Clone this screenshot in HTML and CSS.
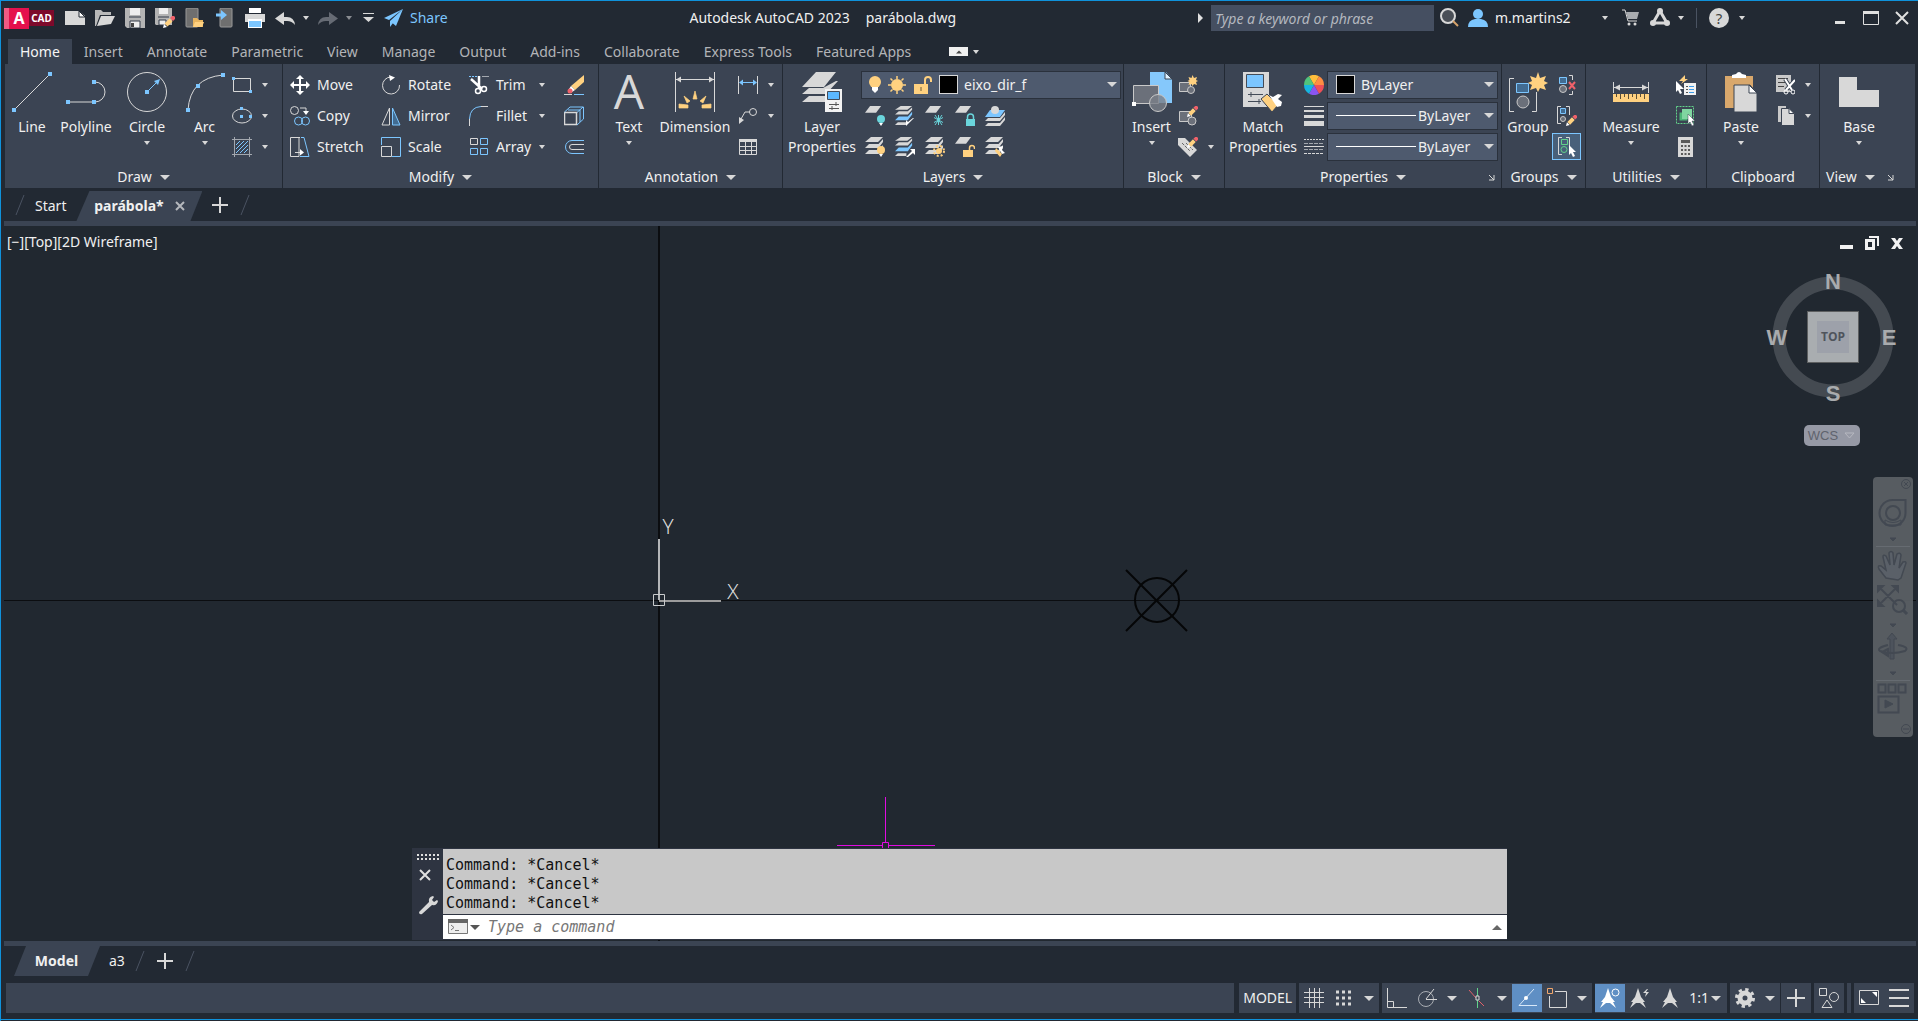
FILE: index.html
```
<!DOCTYPE html>
<html lang="en">
<head>
<meta charset="utf-8">
<title>Autodesk AutoCAD 2023 - parábola.dwg</title>
<link rel="stylesheet" href="styles.css">
</head>
<body>
<svg class="defs" aria-hidden="true">
  <symbol id="sheets" viewBox="0 0 20 20"><path d="M6 0h12l-5 5H0zM0 11l4-4h9.500l4.500-5v3L13.500 11zM0 17l4-4h9.500l4.500-5v3l-4.500 6z" fill="#d8d8d8"/></symbol>
  <symbol id="sheet" viewBox="0 0 20 20"><path d="M6 0h13l-6 8H0z" fill="#d8d8d8"/></symbol>
  <symbol id="sheets-blue" viewBox="0 0 20 20"><path d="M6 0h12l-5 4H0zM0 9l4-3.500h9.500L18 1.500v2.500L13.500 9z" fill="#d8d8d8"/><path d="M0 15l4-4h9.500L18 6v3l-4.500 6z" fill="#7cc6ff"/><path d="M0 20l3-3h9v3z" fill="#d8d8d8"/></symbol>
  <symbol id="slash" viewBox="0 0 10 20"><path d="M1 20L9 0" stroke="#4a5362" fill="none"/></symbol>
  <symbol id="plus" viewBox="0 0 16 16"><path d="M8 0v16M0 8h16" stroke="#d8d8d8" stroke-width="2"/></symbol>
  <symbol id="pencil" viewBox="0 0 12 12"><path d="M0 12l1-4 3 3z" fill="#fff"/><path d="M1.500 7.500l5-5 3 3-5 5z" fill="#ffd180"/><path d="M7 2l2-2h2l1 1v2l-2 2z" fill="#f0616a"/></symbol>
  <symbol id="annot" viewBox="0 0 20 20"><path d="M10 0l3 9 4 5h-2l3 6-6-5H8l-6 5 3-6H3l4-5z" fill="currentColor"/></symbol>
</svg>

<div class="app">
  <header class="titlebar">
    <div class="qat">
      <button class="logo" aria-label="AutoCAD menu"><span class="logo-a">A</span><span class="logo-cad">CAD</span></button>
      <button class="tool" aria-label="New"><svg width="20" height="20"><path d="M0 3h14l6 5v9H0z" fill="#d8d8d8"/><path d="M14 3v6h6z" fill="#fff" stroke="#222933"/></svg></button>
      <button class="tool" aria-label="Open"><svg width="20" height="20"><path d="M0 2h6l2 2h8v3H5L1 18H0z" fill="#b9b9b9"/><path d="M6 8h14l-4 8-14 2z" fill="#d8d8d8"/></svg></button>
      <button class="tool" aria-label="Save"><svg width="20" height="20"><path d="M0 0h20v20H2l-2-2z" fill="#b4b4b4"/><path d="M5 0h10v7H5z" fill="#eee"/><path d="M4 9h12M5 13h10v7H5z" fill="#eee" stroke="#333b48"/><path d="M6 15h3v4H6z" fill="#444"/></svg></button>
      <button class="tool" aria-label="Save as"><svg width="20" height="20"><path d="M0 0h17v17H1l-1-1z" fill="#b4b4b4"/><path d="M4 0h9v6H4z" fill="#eee"/><path d="M3 9h11M4 12h7v5H4z" fill="#eee" stroke="#333b48"/><use href="#pencil" x="8" y="8" width="12" height="12"/></svg></button>
      <button class="tool" aria-label="Open from web and mobile"><svg width="20" height="20"><rect x="1" y="0" width="12" height="19" rx="1" fill="#6f6f6f" stroke="#999"/><path d="M8 10h4l2 2h4v7H8z" fill="#e9b55f"/><path d="M10 14h9l-2 5H8z" fill="#ffd180"/></svg></button>
      <button class="tool" aria-label="Save to web and mobile"><svg width="20" height="20"><rect x="5" y="0" width="12" height="19" rx="1" fill="#6f6f6f" stroke="#999"/><path d="M1 7h7" stroke="#7cc6ff" stroke-width="3"/><path d="M6 2l6 5-6 5z" fill="#7cc6ff"/></svg></button>
      <button class="tool" aria-label="Print"><svg width="20" height="20"><path d="M4 0h12v5H4z" fill="#fff"/><path d="M0 6h20v8H0z" fill="#d8d8d8"/><path d="M3 11h14v9H3z" fill="#fff"/><path d="M4 13h12v6H4z" fill="#7cc6ff"/></svg></button>
      <button class="split" aria-label="Undo"><svg width="20" height="20"><path d="M9 4v5h3q7 0 8 8-3-4-8-4H9v4L0 10.500z" fill="#d8d8d8"/></svg><i class="caret"></i></button>
      <button class="split dim" aria-label="Redo"><svg width="20" height="20"><path d="M11 4v5H8q-7 0-8 8 3-4 8-4h3v4l9-6.500z" fill="#666b74"/></svg><i class="caret"></i></button>
      <button class="customize" aria-label="Customize toolbar"><svg width="11" height="20"><path d="M0 5h11v1H0zM0 9h11l-5.500 5z" fill="#d8d8d8"/></svg></button>
      <button class="share"><svg width="20" height="20"><path d="M0 10L19 1 5 12zM6 13L19 1l-7 17zM6 13l3 2-3 4zM12 12l5 2" fill="#7cc6ff"/></svg>Share</button>
    </div>
    <h1 class="title"><span>Autodesk AutoCAD 2023</span><span>parábola.dwg</span></h1>
    <div class="account">
      <i class="caret-right"></i>
      <input class="search" type="text" placeholder="Type a keyword or phrase" aria-label="Search">
      <button class="tool" aria-label="Search"><svg width="20" height="20"><circle cx="8" cy="8" r="7" fill="#4a4f57" stroke="#d8d8d8" stroke-width="2"/><path d="M13 13l5 5" stroke="#d7a36b" stroke-width="2"/></svg></button>
      <button class="user"><svg width="20" height="20"><circle cx="10" cy="6" r="5" fill="#7cc6ff"/><path d="M0 19q0-7 7-8h6q7 1 7 8z" fill="#7cc6ff"/></svg><span>m.martins2</span><i class="caret"></i></button>
      <button class="tool" aria-label="Store"><svg width="20" height="20"><path d="M1 2h3l3 11h9" fill="none" stroke="#d8d8d8"/><path d="M5 4h13l-2 7H7z" fill="#a8abb0"/><circle cx="8" cy="16" r="1.500" fill="#d8d8d8"/><circle cx="14" cy="16" r="1.500" fill="#d8d8d8"/></svg></button>
      <button class="split" aria-label="Autodesk App"><svg width="20" height="20"><path d="M10 3L3 15h14z" fill="none" stroke="#d8d8d8" stroke-width="3"/><circle cx="10" cy="3" r="3" fill="#d8d8d8"/><circle cx="3" cy="15" r="3" fill="#d8d8d8"/><circle cx="17" cy="15" r="3" fill="#d8d8d8"/></svg><i class="caret"></i></button>
      <button class="help" aria-label="Help"><span class="help-disc">?</span><i class="caret"></i></button>
      <button class="win" aria-label="Minimize"><svg width="16" height="16"><path d="M3 11h10v3H3z" fill="#e0e0e0"/></svg></button>
      <button class="win" aria-label="Maximize"><svg width="16" height="16"><path d="M.5 1.500h15v13H.500z" fill="none" stroke="#e0e0e0"/><path d="M0 1h16v3H0z" fill="#e0e0e0"/></svg></button>
      <button class="win" aria-label="Close"><svg width="16" height="16"><path d="M2 2l12 12M14 2L2 14" stroke="#e0e0e0" stroke-width="2"/></svg></button>
    </div>
  </header>

  <nav class="tabs">
    <button class="tab active">Home</button><button class="tab">Insert</button><button class="tab">Annotate</button><button class="tab">Parametric</button><button class="tab">View</button><button class="tab">Manage</button><button class="tab">Output</button><button class="tab">Add-ins</button><button class="tab">Collaborate</button><button class="tab">Express Tools</button><button class="tab">Featured Apps</button>
    <button class="tab-mode" aria-label="Minimize ribbon"><svg width="19" height="9"><rect width="19" height="9" fill="#f0f0f0"/><path d="M7 6.500l3-3 3 3z" fill="#444"/></svg><i class="caret"></i></button>
  </nav>

  <section class="ribbon">
    <div class="panel">
      <div class="body draw">
        <button class="big"><svg width="40" height="40"><path d="M2 38L38 2" stroke="#d8d8d8"/><path d="M0 36h4v4H0zM36 0h4v4h-4z" fill="#7cc6ff"/></svg>Line</button>
        <button class="big"><svg width="40" height="40"><path d="M2 30h27a10 10 0 0 0 0-20h-1" fill="none" stroke="#d8d8d8"/><path d="M0 28h4v4H0zM26 28h4v4h-4zM26 8h4v4h-4z" fill="#7cc6ff"/></svg>Polyline</button>
        <button class="big"><svg width="40" height="40"><circle cx="20" cy="20" r="19.500" fill="none" stroke="#d8d8d8"/><path d="M20 20L32 8" stroke="#7cc6ff"/><path d="M18 18h4v4h-4zM33 7l-6 2 4 4z" fill="#7cc6ff"/></svg>Circle<i class="caret"></i></button>
        <button class="big"><svg width="40" height="40"><path d="M3 38Q5 6 38 3" fill="none" stroke="#d8d8d8"/><path d="M1 36h4v4H1zM11 12h4v4h-4zM36 1h4v4h-4z" fill="#7cc6ff"/></svg>Arc<i class="caret"></i></button>
        <div class="stack">
          <button class="split" aria-label="Rectangle"><svg width="20" height="20"><path d="M1.500 3.500h17v13h-17z" fill="none" stroke="#d8d8d8"/><path d="M0 2h3v3H0zM17 15h3v3h-3z" fill="#7cc6ff"/></svg><i class="caret"></i></button>
          <button class="split" aria-label="Ellipse"><svg width="20" height="20"><ellipse cx="10" cy="10" rx="9.500" ry="7" fill="none" stroke="#d8d8d8"/><path d="M8 1h3v3H8zM8 9h3v3H8zM17 9h3v3h-3z" fill="#7cc6ff"/></svg><i class="caret"></i></button>
          <button class="split" aria-label="Hatch"><svg width="20" height="20"><path d="M2.500 0v20M17.500 0v20M0 2.500h20M0 17.500h20" stroke="#a3a8af"/><path d="M4 8l4-4M4 12l8-8M4 16L16 4M8 16l8-8M12 16l4-4" stroke="#7cc6ff"/></svg><i class="caret"></i></button>
        </div>
      </div>
      <div class="caption">Draw<i class="caret wide"></i></div>
    </div>

    <div class="panel">
      <div class="body modify">
        <div class="stack">
          <button class="row"><svg width="20" height="20"><path d="M10 0l4 4h-3v5h5V6l4 4-4 4v-3h-5v5h3l-4 4-4-4h3v-5H4v3l-4-4 4-4v3h5V4H6z" fill="#fff"/></svg>Move</button>
          <button class="row"><svg width="20" height="20"><circle cx="4.500" cy="4.500" r="4" fill="none" stroke="#d8d8d8"/><path d="M10 2h6v4" fill="none" stroke="#d8d8d8"/><path d="M13 5h6l-3 4z" fill="#fff"/><circle cx="8.500" cy="15" r="4" fill="none" stroke="#7cc6ff"/><circle cx="15.500" cy="15" r="4" fill="none" stroke="#7cc6ff"/></svg>Copy</button>
          <button class="row"><svg width="20" height="20"><path d="M10 .5H.5v19H9V.5M5 15.500h6" fill="none" stroke="#d8d8d8"/><path d="M10 12l4 3.500-4 3z" fill="#fff"/><path d="M11 .5h3l5 19h-9" fill="none" stroke="#7cc6ff"/></svg>Stretch</button>
        </div>
        <div class="stack">
          <button class="row"><svg width="20" height="20"><path d="M10 2a8.500 8.500 0 1 0 8.500 8" fill="none" stroke="#d8d8d8"/><path d="M8 0l6 2.500L9 6z" fill="#fff"/></svg>Rotate</button>
          <button class="row"><svg width="20" height="20"><path d="M8.500 2v17H1z" fill="none" stroke="#d8d8d8"/><path d="M11.500 2v17H19z" fill="#426c92" stroke="#7cc6ff"/></svg>Mirror</button>
          <button class="row"><svg width="20" height="20"><path d="M.5 8V.5h19v19H11" fill="none" stroke="#7cc6ff"/><path d="M.5 9.500h10v10H.500z" fill="none" stroke="#d8d8d8"/></svg>Scale</button>
        </div>
        <div class="stack">
          <button class="row flyout"><svg width="20" height="20"><path d="M0 1.500h12" stroke="#7cc6ff" stroke-dasharray="2 1"/><path d="M13 1.500h7" stroke="#a3a8af"/><path d="M2 4l11 10M10 1v13" stroke="#fff" stroke-width="2.500"/><circle cx="9" cy="16" r="2.500" fill="none" stroke="#fff" stroke-width="1.500"/><circle cx="15" cy="14" r="2.500" fill="none" stroke="#fff" stroke-width="1.500"/></svg><span>Trim</span><i class="caret"></i></button>
          <button class="row flyout"><svg width="20" height="20"><path d="M.5 20v-7M12 .5h7" stroke="#d8d8d8" fill="none"/><path d="M.5 13Q1 1 12 .5" fill="none" stroke="#7cc6ff"/></svg><span>Fillet</span><i class="caret"></i></button>
          <button class="row flyout"><svg width="20" height="20"><path d="M1.500 1.500h7v6h-7z" fill="none" stroke="#d8d8d8"/><path d="M11.500 1.500h7v6h-7zM1.500 11.500h7v6h-7zM11.500 11.500h7v6h-7z" fill="none" stroke="#7cc6ff"/></svg><span>Array</span><i class="caret"></i></button>
        </div>
        <div class="stack">
          <button class="tool" aria-label="Erase"><svg width="20" height="20"><path d="M0 19.500h8" stroke="#d8d8d8"/><path d="M10 19.500h10" stroke="#7cc6ff"/><path d="M20 0v7L11 15 7 11z" fill="#ffd180"/><path d="M7 11l4 4-3 2-3-3z" fill="#fff"/><circle cx="6" cy="16" r="2.500" fill="#f0616a"/></svg></button>
          <button class="tool" aria-label="Explode"><svg width="20" height="20"><path d="M.5 6.500h12v12H.500z" fill="none" stroke="#d8d8d8" stroke-width="1.500"/><path d="M.5 6L6 1h13.500v12L13 19M13 6.500L19 1M4 4h12v12" fill="none" stroke="#7cc6ff"/></svg></button>
          <button class="tool" aria-label="Offset"><svg width="20" height="20"><path d="M20 3.500H8a6.500 6.500 0 0 0 0 13h12" fill="none" stroke="#7cc6ff"/><path d="M20 7.500H8a2.500 2.500 0 0 0 0 5h12" fill="none" stroke="#d8d8d8"/></svg></button>
        </div>
      </div>
      <div class="caption">Modify<i class="caret wide"></i></div>
    </div>

    <div class="panel">
      <div class="body annotation">
        <button class="big"><svg class="glyph" width="40" height="40"><text x="20" y="37" text-anchor="middle" class="glyph-a">A</text></svg>Text<i class="caret"></i></button>
        <button class="big"><svg width="40" height="40"><path d="M.5 0v40M39.500 0v40M1 7.500h38" stroke="#d8d8d8"/><path d="M1 7.500l5-3v6zM39 7.500l-5-3v6z" fill="#d8d8d8"/><path d="M20 19l2 8h-4zM9 24l6 5-3 2zM31 24l-6 5 3 2zM4 32l9 1v3H4zM36 32l-9 1v3h9z" fill="#ffd180" stroke="#ffd180" stroke-width=".7"/></svg>Dimension</button>
        <div class="stack">
          <button class="split" aria-label="Linear dimension"><svg width="20" height="20"><path d="M.5 1v18M19.500 1v18" stroke="#d8d8d8"/><path d="M2 7.500h16" stroke="#7cc6ff"/><path d="M1 7.500l4-3v6zM19 7.500l-4-3v6z" fill="#7cc6ff"/></svg><i class="caret"></i></button>
          <button class="split" aria-label="Leader"><svg width="20" height="20"><path d="M3 13l4-7h5" fill="none" stroke="#d8d8d8"/><circle cx="15" cy="6" r="3.500" fill="none" stroke="#d8d8d8"/><path d="M1 18v-7l5 3z" fill="#d8d8d8"/></svg><i class="caret"></i></button>
          <button class="tool" aria-label="Table"><svg width="20" height="20"><path d="M1 2h18v3H1z" fill="#d8d8d8"/><path d="M1.500 2.500h17v15h-17zM1 9.500h18M1 13.500h18M7.500 5v13M13.500 5v13" fill="none" stroke="#d8d8d8"/></svg></button>
        </div>
      </div>
      <div class="caption">Annotation<i class="caret wide"></i></div>
    </div>

    <div class="panel">
      <div class="body layers">
        <button class="big two-line"><svg width="40" height="40"><path d="M14 0h20L22 15H0zM0 22l7-6h14L34 9h2L24 22zM0 30l7-6h17v6z" fill="#d8d8d8"/><path d="M23 17h17v23H23z" fill="#f2f2f2"/><path d="M25.500 19.500h12v8h-12z" fill="#5cb8ff" stroke="#444c58"/><path d="M27 32.500h10M27 36.500h10M34 30v4M30 34v4" stroke="#555"/></svg>Layer<br>Properties</button>
        <div class="layer-tools">
          <div class="combo layer-combo">
            <svg width="12" height="20"><circle cx="6" cy="7" r="6" fill="#ffd180"/><path d="M3 12h6v3l-3 3-3-3z" fill="#fff"/></svg>
            <svg width="20" height="20"><circle cx="10" cy="10" r="6" fill="#ffd180"/><path d="M10 1v3M10 16v3M1 10h3M16 10h3M3.500 3.500l2 2M14.500 14.500l2 2M16.500 3.500l-2 2M3.500 16.500l2-2" stroke="#ffd180" stroke-width="1.500"/></svg>
            <svg width="20" height="20"><path d="M1 9h14v10H1z" fill="#ffd180"/><path d="M12 9V5a3 3 0 0 1 6 0v2" fill="none" stroke="#ffd180" stroke-width="2"/><path d="M8 12v4" stroke="#6c5a36"/></svg>
            <span class="swatch"></span>
            <select aria-label="Layer"><option>eixo_dir_f</option></select><i class="caret wide"></i>
          </div>
          <div class="icon-row">
            <button class="tool" aria-label="Layer off"><svg width="20" height="20"><use href="#sheet" width="17" height="17"/><circle cx="16" cy="13" r="4" fill="#6ad5dc"/><path d="M14 17h4l-2 3z" fill="#fff"/></svg></button>
            <button class="tool" aria-label="Isolate"><svg width="20" height="20"><use href="#sheets-blue" width="19" height="19"/><path d="M19 12l-8 8v-6l2 2 5-4z" fill="#fff"/></svg></button>
            <button class="tool" aria-label="Freeze"><svg width="20" height="20"><use href="#sheet" width="17" height="17"/><path d="M13.500 9v10M9 11.500l9 5M18 11.500l-9 5M10 9l7 10M17 9l-7 10" stroke="#6ad5dc"/></svg></button>
            <button class="tool" aria-label="Lock"><svg width="20" height="20"><use href="#sheet" width="17" height="17"/><path d="M11 13h9v7h-9z" fill="#6ad5dc"/><path d="M12.500 13v-2a3 3 0 0 1 6 0v2" fill="none" stroke="#6ad5dc" stroke-width="1.500"/></svg></button>
            <button class="tool" aria-label="Make current"><svg width="20" height="20"><path d="M5 4h15l-5 7H0z" fill="#7cc6ff"/><path d="M0 15l3-3h12l5-6v3l-5 6zM0 20l3-3h12l5-6v3l-5 6z" fill="#d8d8d8"/><circle cx="10" cy="4" r="4" fill="#d8d8d8"/></svg></button>
          </div>
          <div class="icon-row">
            <button class="tool" aria-label="All layers on"><svg width="20" height="20"><use href="#sheets" width="20" height="20"/><circle cx="16" cy="13" r="4" fill="#ffd180"/><path d="M14 17h4l-2 3z" fill="#fff"/></svg></button>
            <button class="tool" aria-label="Unisolate"><svg width="20" height="20"><use href="#sheets-blue" width="19" height="19"/><path d="M11 20l6-6-2-2h5v6l-2-2-5 4z" fill="#fff"/></svg></button>
            <button class="tool" aria-label="Thaw all"><svg width="20" height="20"><use href="#sheets" width="20" height="20"/><circle cx="14" cy="14" r="5" fill="none" stroke="#ffd180" stroke-width="2" stroke-dasharray="2 2"/><circle cx="14" cy="14" r="3" fill="#ffd180"/></svg></button>
            <button class="tool" aria-label="Unlock"><svg width="20" height="20"><use href="#sheet" width="17" height="17"/><path d="M8 13h10v7H8z" fill="#ffd180"/><path d="M14.500 13v-2a2.500 2.500 0 0 1 5 0v1" fill="none" stroke="#ffd180" stroke-width="1.500"/></svg></button>
            <button class="tool" aria-label="Match layer"><svg width="20" height="20"><use href="#sheets" width="20" height="20"/><path d="M11 11l6 6-2 3-5-6z" fill="#ffd180"/><path d="M13 10l5-1-1 4 3 3-3 1z" fill="#fff"/></svg></button>
          </div>
        </div>
      </div>
      <div class="caption">Layers<i class="caret wide"></i></div>
    </div>

    <div class="panel">
      <div class="body block">
        <button class="big"><svg width="40" height="40"><path d="M18 0h16l6 7v24H18z" fill="#85c8fb"/><path d="M33 0v7h7z" fill="#dff1ff" stroke="#3b4453"/><path d="M1.500 13.500h25v18h-25z" fill="#6b707a" stroke="#c9c9c9"/><circle cx="26" cy="31" r="8.500" fill="#7a7f88" fill-opacity=".8" stroke="#c9c9c9"/><path d="M0 30h4v4H0z" fill="#fff"/></svg>Insert<i class="caret"></i></button>
        <div class="stack">
          <button class="tool" aria-label="Create block"><svg width="20" height="20"><path d="M1.500 7.500h11v9h-11z" fill="#6b707a" stroke="#c9c9c9"/><circle cx="13" cy="15" r="3.500" fill="#6b707a" stroke="#c9c9c9"/><path d="M14.500 0l1.500 3 3-1-1 3 2 1-2 1 1 3-3-1-1.500 2-1-2-3 1 1-3-2-1 2-1-1-3 3 1z" fill="#ffd180"/></svg></button>
          <button class="tool" aria-label="Edit block"><svg width="20" height="20"><path d="M1.500 5.500h12v10h-12z" fill="#6b707a" stroke="#c9c9c9"/><circle cx="14" cy="15" r="4" fill="#6b707a" stroke="#c9c9c9"/><use href="#pencil" x="9" y="0" width="11" height="11"/></svg></button>
          <button class="split" aria-label="Edit attributes"><svg width="20" height="20"><path d="M0 1h7l12 12-7 7L0 8z" fill="#d8d8d8"/><path d="M4 6l8 8M8 6l7 7" stroke="#666" stroke-dasharray="3 1"/><use href="#pencil" x="9" y="0" width="11" height="11"/></svg><i class="caret"></i></button>
        </div>
      </div>
      <div class="caption">Block<i class="caret wide"></i></div>
    </div>

    <div class="panel">
      <div class="body properties">
        <button class="big two-line"><svg width="40" height="40"><path d="M0 0h26v35H0z" fill="#d8d8d8"/><path d="M3.500 2.500h17v13h-17z" fill="#7cc6ff" stroke="#444c58"/><path d="M5 22.500h15M5 29.500h13M8 20v5M16 27v5" stroke="#444c58"/><path d="M18 27l6-5 11 11-6 7z" fill="#ffd180" stroke="#3b4453"/><path d="M26 23l4 2 5-3 4 1-4 4 4 3-1 4-4 1z" fill="#fff"/></svg>Match<br>Properties</button>
        <div class="prop-grid">
          <svg width="20" height="20" viewBox="0 0 20 20"><path d="M10 10L5 1.300A10 10 0 0 1 15 1.300z" fill="#ffbe3c"/><path d="M10 10l5-8.700A10 10 0 0 1 20 10z" fill="#ff8c42"/><path d="M10 10h10a10 10 0 0 1-5 8.700z" fill="#ee4f57"/><path d="M10 10l5 8.700a10 10 0 0 1-10 0z" fill="#8a55f0"/><path d="M10 10L5 18.700A10 10 0 0 1 0 10z" fill="#16b5e0"/><path d="M10 10H0a10 10 0 0 1 5-8.700z" fill="#50c37c"/></svg>
          <div class="combo color-combo"><span class="swatch"></span><select aria-label="Colour"><option>ByLayer</option></select><i class="caret wide"></i></div>
          <svg width="20" height="20"><path d="M0 0h20v1H0zM0 4h20v2H0zM0 9h20v3H0zM0 15h20v5H0z" fill="#d8d8d8"/></svg>
          <div class="combo"><span class="sample"></span><select aria-label="Lineweight"><option>ByLayer</option></select><i class="caret wide"></i></div>
          <svg width="20" height="20"><path d="M0 2.500h20" stroke="#d8d8d8" stroke-dasharray="2 1"/><path d="M0 6.500h20M0 12.500h20" stroke="#a3a8af" stroke-dasharray="4 1"/><path d="M0 9.500h20" stroke="#d8d8d8"/><path d="M0 16.500h20" stroke="#d8d8d8" stroke-dasharray="3 1"/></svg>
          <div class="combo"><span class="sample"></span><select aria-label="Linetype"><option>ByLayer</option></select><i class="caret wide"></i></div>
        </div>
      </div>
      <div class="caption with-launcher"><span>Properties<i class="caret wide"></i></span><button class="launcher" aria-label="Properties dialog"><svg width="7" height="7"><path d="M1 1l5 5M6 1v5H1" fill="none" stroke="#d8d8d8"/></svg></button></div>
    </div>

    <div class="panel">
      <div class="body groups">
        <button class="big"><svg width="40" height="40"><path d="M6 6.500H1.500v33H6M24 39.500h4.500V20" fill="none" stroke="#d8d8d8"/><path d="M8.500 11.500h12v9h-12z" fill="#426c92" stroke="#7cc6ff"/><circle cx="15" cy="30" r="6" fill="#6b707a" stroke="#c9c9c9"/><path d="M30 0l2 6 6-2-2 5 4 2-4 2 2 5-6-2-2 4-2-4-6 2 2-5-4-2 4-2-2-5 6 2z" fill="#ffd180"/></svg>Group</button>
        <div class="stack">
          <button class="tool" aria-label="Ungroup"><svg width="20" height="20"><path d="M2.500 2.500h7v6h-7z" fill="#426c92" stroke="#7cc6ff"/><circle cx="6" cy="14" r="3.500" fill="#6b707a" stroke="#c9c9c9"/><path d="M12 .5h3.500V5M12 19.500h3.500V16" fill="none" stroke="#d8d8d8"/><path d="M12 7l6 7M18 7l-6 7" stroke="#f0616a" stroke-width="2"/></svg></button>
          <button class="tool" aria-label="Edit group"><svg width="20" height="20"><path d="M4 .5H.5v17H4M9 .5h3.500V9" fill="none" stroke="#d8d8d8"/><path d="M3.500 2.500h5v5h-5z" fill="#426c92" stroke="#7cc6ff"/><circle cx="6" cy="13" r="2.500" fill="#6b707a" stroke="#c9c9c9"/><use href="#pencil" x="9" y="9" width="11" height="11"/></svg></button>
          <button class="tool on" aria-label="Group selection"><svg width="20" height="20"><path d="M5 .5H1.500v17H5M9 .5h3.500V9" fill="none" stroke="#d8d8d8"/><path d="M4.500 2.500h6v5h-6z" fill="none" stroke="#62d28a"/><circle cx="7" cy="12.500" r="3" fill="none" stroke="#62d28a"/><path d="M12 8l7 7h-3l2 4-2 1-2-4-2 2z" fill="#fff"/></svg></button>
        </div>
      </div>
      <div class="caption">Groups<i class="caret wide"></i></div>
    </div>

    <div class="panel">
      <div class="body utilities">
        <button class="big"><svg width="40" height="40"><path d="M2.500 10v11M37.500 10v11M3 15.500h34" stroke="#d8d8d8"/><path d="M3 15.500l6-3v6zM37 15.500l-6-3v6z" fill="#d8d8d8"/><path d="M2 22h36v8H2z" fill="#ffd180"/><path d="M5.500 22v3M9.500 22v5M13.500 22v3M17.500 22v5M21.500 22v3M25.500 22v5M29.500 22v3M33.500 22v5" stroke="#5c5037"/></svg>Measure<i class="caret"></i></button>
        <div class="stack">
          <button class="tool" aria-label="Quick select"><svg width="20" height="20"><path d="M9 0L3 6h4l-2 3 7-5H9z" fill="#ffd180"/><path d="M0 6l8 8H4l2 4-2 1-2-4-2 2z" fill="#fff"/><path d="M8 8h12v12H8z" fill="#f2f2f2"/><path d="M13 11.500h5M13 14.500h5M13 17.500h5" stroke="#3b9be8"/><path d="M10 11h2v1h-2zM10 14h2v1h-2zM10 17h2v1h-2z" fill="#555"/></svg></button>
          <button class="tool" aria-label="Select all"><svg width="20" height="20"><path d="M.5.500h17v17H.500z" fill="none" stroke="#62d28a" stroke-dasharray="2 1"/><path d="M3 6h9v9H3z" fill="#4bb676" stroke="#3b4453"/><path d="M6 3h10v10H6z" fill="#7fd6a0"/><path d="M12 8l7 7h-3l2 4-2 1-2-4-2 2z" fill="#fff" stroke="#3b4453" stroke-width=".5"/></svg></button>
          <button class="tool" aria-label="Calculator"><svg width="20" height="20"><path d="M2 0h15v20H2z" fill="#d8d8d8"/><path d="M5 3h9v3H5zM5 8h2v2H5zM8.500 8h2v2h-2zM12 8h2v2h-2zM5 12h2v2H5zM8.500 12h2v2h-2zM12 12h2v2h-2zM5 16h2v2H5zM8.500 16h2v2h-2zM12 16h2v2h-2z" fill="#5a5a5a"/></svg></button>
        </div>
      </div>
      <div class="caption">Utilities<i class="caret wide"></i></div>
    </div>

    <div class="panel">
      <div class="body clipboard">
        <button class="big"><svg width="40" height="40"><path d="M4 4h28v32H4z" fill="#d9a86c"/><path d="M11 6V3l4-1q3-4 6 0l4 1v3z" fill="#fff"/><path d="M13 13h16l7 8v19H13z" fill="#d8d8d8" stroke="#3b4453"/><path d="M28 13v8h8z" fill="#fff" stroke="#3b4453"/></svg>Paste<i class="caret"></i></button>
        <div class="stack">
          <button class="split" aria-label="Cut"><svg width="20" height="20"><path d="M1 0h15v17H1z" fill="#c9c9c9"/><path d="M3 3.500h10M3 7.500h7M3 11.500h6" stroke="#444"/><path d="M10 4l7 11M20 5l-9 10" stroke="#3b4453" stroke-width="4"/><path d="M10 4l7 11M20 5l-9 10" stroke="#fff" stroke-width="2"/><circle cx="11" cy="17" r="2" fill="none" stroke="#fff"/><circle cx="18" cy="17" r="2" fill="none" stroke="#fff"/></svg><i class="caret"></i></button>
          <button class="split" aria-label="Copy clip"><svg width="20" height="20"><path d="M3 0h8v16H3z" fill="#c9c9c9"/><path d="M6.500 2.500h8l5 5v12h-13z" fill="#d8d8d8" stroke="#3b4453"/><path d="M14 2.500v5h5z" fill="#fff" stroke="#3b4453"/></svg><i class="caret"></i></button>
        </div>
      </div>
      <div class="caption">Clipboard</div>
    </div>

    <div class="panel last">
      <div class="body base">
        <button class="big"><svg width="40" height="40"><path d="M0 5h18v13h22v17H0z" fill="#d8d8d8"/></svg>Base<i class="caret"></i></button>
      </div>
      <div class="caption view-caption">View<i class="caret wide"></i><button class="launcher" aria-label="View dialog"><svg width="7" height="7"><path d="M1 1l5 5M6 1v5H1" fill="none" stroke="#d8d8d8"/></svg></button></div>
    </div>
  </section>

  <nav class="file-tabs">
    <svg width="10" height="20"><use href="#slash"/></svg>
    <button class="file-tab">Start</button>
    <button class="file-tab current">parábola*<svg width="10" height="10"><path d="M1 1l8 8M9 1L1 9" stroke="#b5b8bd" stroke-width="2"/></svg></button>
    <button class="add" aria-label="New drawing"><svg width="16" height="16"><use href="#plus"/></svg></button>
    <svg width="10" height="20"><use href="#slash"/></svg>
  </nav>

  <main class="canvas">
    <svg class="drawing" width="100%" height="100%">
      <path d="M655 0V720" stroke="#0b0d10" stroke-width="2"/>
      <line x1="0" x2="100%" y1="374.500" y2="374.500" stroke="#0b0d10"/>
      <path d="M655 313V374" stroke="#b4b6b8" stroke-width="2"/><path d="M655 375H717" stroke="#9c9c9c" stroke-width="2"/>
      <path d="M649.500 368.500h11v11h-11z" fill="none" stroke="#c9cbcc"/>
      <text x="664" y="308" class="ucs" text-anchor="middle">Y</text><text x="729" y="373" class="ucs" text-anchor="middle">X</text>
      <g fill="none" stroke="#050607"><circle cx="1153" cy="374" r="22" stroke-width="2"/><path d="M1122 344l61 61M1183 344l-61 61" stroke-width="2"/></g>
      <path d="M881.500 571v45M833 619.500h45M885 619.500h46M878.500 616.500h6v6h-6z" fill="none" stroke="#e00ce0"/>
    </svg>
    <div class="view-label">[−][Top][2D Wireframe]</div>
    <div class="doc-window">
      <button aria-label="Minimize drawing"><svg width="14" height="14"><path d="M0 9h13v4H0z" fill="#f2f2f2"/></svg></button>
      <button aria-label="Restore drawing"><svg width="14" height="14"><path d="M4 0h10v10h-2V2H4zM0 3h10v11H0zM3 6v5h4V6z" fill="#f2f2f2" fill-rule="evenodd"/></svg></button>
      <button aria-label="Close drawing"><svg width="14" height="14"><path d="M1 2h4l2 3 2-3h4L9 7.500l4 5.500H9l-2-3-2 3H1l4-5.500z" fill="#f2f2f2"/></svg></button>
    </div>
    <div class="viewcube">
      <svg width="144" height="144">
        <circle cx="72" cy="72" r="54" fill="none" stroke="#444a51" stroke-width="13"/>
        <rect x="46.500" y="46.500" width="51" height="51" fill="#a9adb0" stroke="#5d5f60"/>
        <rect x="56" y="56" width="32" height="32" fill="#9da1aa"/>
        <text x="72" y="76" class="cube-top">TOP</text>
        <text x="72" y="24" class="compass">N</text><text x="72" y="136" class="compass">S</text><text x="16" y="80" class="compass">W</text><text x="128" y="80" class="compass">E</text>
      </svg>
      <button class="wcs">WCS<svg width="12" height="8"><path d="M1 1h9L5.500 6z" fill="none" stroke="#b6b8c0"/></svg></button>
    </div>
    <div class="navbar">
      <svg width="40" height="260" fill="none" stroke="#454b54">
        <circle cx="33" cy="7" r="4.500"/><path d="M31 5l4 4M35 5l-4 4"/>
        <path d="M20 23h12.500v13a13 13 0 1 1-12.500-13z" stroke-width="2"/><circle cx="20" cy="36" r="7" stroke-width="2"/><path d="M12 43q8 5 16 0v5H12z"/>
        <path d="M17 61h6l-3 3z" fill="#454b54"/><path d="M3 69.500h34" stroke="#6a6f75"/>
        <path d="M13 101l-7-9q-2-4 2-3l5 4-3-13q0-3 3-1l4 9-1-12q2-3 4 0l1 12 3-11q3-2 4 1l-2 13 4-6q3-1 3 1l-5 15-3 2z" stroke-width="1.500" fill="#5e646c"/>
        <path d="M6 110l18 18M24 110L6 128M5 109l5 0-5 5zM25 109h-5l5 5zM5 129v-5l5 5z" stroke-width="2"/><circle cx="26" cy="129" r="6" stroke-width="2"/><path d="M30 133l4 4" stroke-width="3"/>
        <path d="M17 147h6l-3 3z" fill="#454b54"/>
        <path d="M17 182v-20h-3l5-6 5 6h-3v20z" fill="#50565f"/><path d="M15 168q-12 3-8 6 12 4 25 0 5-4-7-6M15 172l-6 3 6 4z" stroke-width="2"/>
        <path d="M17 195h6l-3 3z" fill="#454b54"/><path d="M3 203.500h34" stroke="#6a6f75"/>
        <path d="M5.500 207.500h7v8h-7zM15.500 207.500h7v8h-7zM25.500 207.500h7v8h-7zM5.500 219.500h20v16h-20z" stroke-width="2"/><path d="M12 223l8 4-8 4z" fill="#454b54"/>
        <circle cx="33" cy="252" r="4.500"/><path d="M30 252h6"/>
      </svg>
    </div>
    <div class="command">
      <div class="command-side">
        <svg width="22" height="7"><path d="M0 1h22M0 5h22" stroke="#e0e0e0" stroke-width="2" stroke-dasharray="2 2"/></svg>
        <button aria-label="Close command line"><svg width="12" height="12"><path d="M1 1l10 10M11 1L1 11" stroke="#e0e0e0" stroke-width="2"/></svg></button>
        <button aria-label="Customize command line"><svg width="20" height="20"><path d="M1 17L11 7q-1-5 4-6l1 1-2 3 2 2 3-2 1 1q-1 5-6 4L4 19q-3 1-3-2z" fill="#d8d8d8"/></svg></button>
      </div>
      <div class="command-main">
        <div class="history"><p>Command: *Cancel*</p><p>Command: *Cancel*</p><p>Command: *Cancel*</p></div>
        <div class="prompt">
          <svg width="20" height="16"><path d="M.5.500h19v14H.500z" fill="#eee" stroke="#777"/><path d="M0 0h20v4H0z" fill="#666"/><path d="M3 6l3 2.500L3 11M7 11.500h4" fill="none" stroke="#777"/></svg>
          <i class="caret wide dark"></i>
          <input type="text" placeholder="Type a command" aria-label="Command">
          <i class="caret-up"></i>
        </div>
      </div>
    </div>
  </main>

  <nav class="layout-tabs">
    <button class="layout-tab current">Model</button>
    <button class="layout-tab">a3</button>
    <svg width="10" height="20"><use href="#slash"/></svg>
    <button class="add" aria-label="New layout"><svg width="16" height="16"><use href="#plus"/></svg></button>
    <svg width="10" height="20"><use href="#slash"/></svg>
  </nav>

  <footer class="status">
    <div class="cell message"></div>
    <button class="cell model">MODEL</button>
    <div class="cell">
      <button class="st" aria-label="Grid"><svg width="20" height="20"><path d="M5.500 0v20M10.500 0v20M15.500 0v20M0 4.500h20M0 9.500h20M0 14.500h20" stroke="#d8d8d8"/></svg></button>
      <button class="st" aria-label="Snap"><svg width="20" height="20"><path d="M2 4h16M2 10h16M2 16h16" stroke="#d8d8d8" stroke-width="3" stroke-dasharray="3 3"/></svg></button>
      <i class="caret wide"></i>
    </div>
    <div class="cell">
      <button class="st" aria-label="Ortho"><svg width="20" height="20"><path d="M.5 0v19.500H20M.5 13.500h6v6" fill="none" stroke="#d8d8d8"/></svg></button>
      <button class="st" aria-label="Polar"><svg width="20" height="20"><circle cx="9" cy="11" r="7.500" fill="none" stroke="#a9adb3"/><path d="M9 11.500h11M9 11L17 1" stroke="#d8d8d8"/></svg></button>
      <i class="caret wide"></i>
      <button class="st" aria-label="Isometric"><svg width="20" height="20"><path d="M2 2l7 8M12 13l5 5" stroke="#e0616a"/><path d="M10.500 0v8M10.500 12v8" stroke="#62d28a"/><path d="M9 8h3v4H9z" fill="none" stroke="#d8d8d8"/></svg></button>
      <i class="caret wide"></i>
      <button class="st sel" aria-label="Object snap tracking"><svg width="20" height="20"><path d="M20 17.500H2L17 1" fill="none" stroke="#d8e8f8"/><circle cx="9" cy="10" r="2" fill="#fff"/></svg></button>
      <button class="st" aria-label="Object snap"><svg width="20" height="20"><path d="M8 3.500h11.500v16h-17V8" fill="none" stroke="#d8d8d8"/><path d="M.5.500h5v5h-5z" fill="none" stroke="#f0a66c"/></svg></button>
      <i class="caret wide"></i>
    </div>
    <div class="cell">
      <button class="st sel" aria-label="Annotation visibility"><svg width="20" height="20"><use href="#annot" x="-2" y="0" width="20" height="20"/><circle cx="15.500" cy="4.500" r="3.500" fill="none" stroke="#fff"/></svg></button>
      <button class="st" aria-label="Auto scale"><svg width="20" height="20"><use href="#annot" x="-2" y="0" width="20" height="20"/><path d="M17 1l-4 4h3l-1 4 4-5h-3l2-3z" fill="#d8d8d8"/></svg></button>
      <button class="st" aria-label="Annotation scale"><svg width="20" height="20"><use href="#annot" width="20" height="20"/></svg></button>
      <button class="scale">1:1<i class="caret wide"></i></button>
    </div>
    <div class="cell joined">
      <button class="st" aria-label="Workspace"><svg width="20" height="20"><circle cx="10" cy="10" r="5" fill="none" stroke="#d8d8d8" stroke-width="5"/><circle cx="10" cy="10" r="8.500" fill="none" stroke="#d8d8d8" stroke-width="3" stroke-dasharray="3.300 3.370"/></svg></button>
      <i class="caret wide"></i>
    </div>
    <div class="cell"><button class="st" aria-label="Annotation monitor"><svg width="20" height="20"><path d="M10 1v18M1 10h18" stroke="#d8d8d8" stroke-width="2"/></svg></button></div>
    <div class="cell"><button class="st" aria-label="Isolate objects"><svg width="20" height="20"><path d="M.5.500h7v7h-7zM8 12l5 7.500H3z" fill="none" stroke="#d8d8d8"/><circle cx="15" cy="9" r="4.500" fill="none" stroke="#d8d8d8"/></svg></button></div>
    <div class="cell sliver"></div>
    <div class="cell">
      <button class="st" aria-label="Clean screen"><svg width="20" height="20"><path d="M.5 2.500h19v14H.500z" fill="none" stroke="#d8d8d8"/><path d="M13 4h5v5zM2 10v5h5zM12 9l4-4M4 14l4-3" fill="#fff"/></svg></button>
      <button class="st" aria-label="Customization"><svg width="20" height="20"><path d="M0 2h20M0 10h20M0 18h20" stroke="#d8d8d8" stroke-width="2"/></svg></button>
    </div>
  </footer>
</div>
</body>
</html>
```

FILE: styles.css
```
* { box-sizing: border-box; }
body { margin: 0; background: #222933; color: #f0f0f0; font: 14px/20px "Noto Sans", "Open Sans", sans-serif; }
button, input, select { font: inherit; color: inherit; background: none; border: 0; padding: 0; margin: 0; outline: 0; }
button { display: flex; align-items: center; justify-content: center; white-space: nowrap; }
svg { display: block; flex: none; }
p { margin: 0; }
.defs { position: absolute; width: 0; height: 0; }

.app { height: 100vh; display: flex; flex-direction: column; border: 1px solid #0f92dc; border-right: 0; border-bottom: 0; }

.caret { flex: none; width: 0; height: 0; border: 3px solid transparent; border-top: 4px solid #d8d8d8; border-bottom: 0; }
.caret.wide { border-width: 5px 5px 0; }
.caret.dark { border-top-color: #555; }
.caret-right { width: 0; height: 0; border: 5px solid transparent; border-left-color: #e0e0e0; border-right: 0; }
.caret-up { border: 5px solid transparent; border-bottom-color: #666; border-top: 0; }
.dim .caret { border-top-color: #8a8d92; }

/* Title bar */
.titlebar { flex: none; height: 38px; display: grid; grid-template-columns: auto 1fr auto; align-items: start; }
.qat { display: flex; align-items: center; height: 34px; gap: 10px; padding-left: 3px; }
.qat .split { gap: 8px; margin-right: -1px; }
.logo { margin-right: 1px; font-weight: 700; color: #fff; }
.logo-a { width: 25px; height: 21px; background: #e5114d; border-left: 5px solid #f05a83; line-height: 20px; font-size: 16px; }
.logo-cad { width: 25px; height: 16px; background: #7d0a2b; font-size: 10px; line-height: 16px; }
.customize { margin-left: 2px; }
.share { gap: 6px; color: #7cc6ff; }
.title { margin: 7px 0 0; font-size: 14px; font-weight: 400; display: flex; justify-content: center; gap: 16px; }
.account { display: flex; align-items: center; height: 34px; padding-right: 8px; }
.search { width: 223px; height: 26px; margin: 0 6px 0 8px; padding-left: 4px; background: #454f61; }
.search::placeholder { color: #b4b8bf; font-style: italic; opacity: 1; }
.user { margin-left: 8px; width: 140px; gap: 7px; justify-content: flex-start; }
.user .caret { margin-left: auto; }
.user + .tool { margin-left: 13px; }
.account .split { margin-left: 9px; gap: 8px; }
.help { gap: 10px; margin-left: 12px; padding-left: 12px; border-left: 1px solid #4a5362; }
.help-disc { width: 20px; height: 20px; border-radius: 50%; background: #d8d8d8; color: #444; font-size: 15px; }
.win { width: 16px; margin-left: 15px; }
.help + .win { margin-left: 87px; }

/* Ribbon tabs */
.tabs { flex: none; display: flex; height: 25px; padding-left: 7px; }
.tab { padding: 0 12px; color: #b2b4b8; }
.tab.active { background: #3b4453; color: #f5f5f5; }
.tab-mode { gap: 5px; margin-left: 26px; }

/* Ribbon */
.ribbon { flex: none; display: flex; margin: 0 3px 0 4px; height: 124px; background: #3b4453; }
.panel { flex: none; display: flex; flex-direction: column; border-right: 1px solid #222933; }
.panel.last { flex: 1; border: 0; }
.body { display: grid; height: 102px; padding-top: 5px; align-items: start; }
.caption { height: 22px; display: flex; align-items: center; justify-content: center; gap: 8px; line-height: 20px; }
.caption span { display: flex; align-items: center; gap: 8px; }
.with-launcher { display: grid; grid-template-columns: 20px 1fr 20px; gap: 0; }
.with-launcher span { grid-column: 2; justify-content: center; }
.view-caption { justify-content: flex-start; padding-left: 6px; }
.view-caption .launcher { margin-left: 4px; }
.big { flex-direction: column; justify-content: flex-start; padding-top: 3px; line-height: 20px; }
.big svg { margin-bottom: 5px; }
.big .caret { margin-top: 4px; }
.big.two-line { display: block; text-align: center; }
.big.two-line svg { margin: 0 auto 5px; }
.stack { display: grid; grid-auto-rows: 31px; align-items: center; justify-items: start; }
.tool { width: 20px; }
.split { gap: 10px; }
.row { gap: 7px; }
.flyout { width: 76px; justify-content: flex-start; }
.flyout .caret { margin-left: auto; }
.tool.on { width: 29px; height: 27px; margin-left: -5px; background: #48607a; border: 1px solid #7cc6ff; }

.draw { grid-template-columns: 46px 62px 60px 55px 50px; padding-left: 4px; }
.modify { grid-template-columns: 91px 88px 95px 34px; padding-left: 7px; }
.annotation { grid-template-columns: 52px 78px 47px; padding-left: 4px; column-gap: 1px; }
.annotation .tool, .annotation .split { margin-left: 3px; }
.layers { grid-template-columns: 78px 262px; }
.block { grid-template-columns: 53px 46px; padding-left: 1px; }
.properties { grid-template-columns: 76px 200px; }
.groups { grid-template-columns: 50px 28px; column-gap: 4px; padding-left: 1px; }
.utilities { grid-template-columns: 90px 30px; }
.clipboard { grid-template-columns: 68px 44px; }
.base { grid-template-columns: 78px; }
.glyph { overflow: visible; }
.glyph-a { font: 48px "Open Sans", sans-serif; fill: #d8d8d8; }

.combo { display: flex; align-items: center; height: 28px; background: #4e5a6e; border: 1px solid #2a313c; padding: 0 3px 0 8px; }
.combo select { appearance: none; flex: 1; min-width: 0; }
.swatch { flex: none; width: 19px; height: 19px; background: #000; border: 1px solid #d8d8d8; }
.layer-tools { display: grid; grid-template-rows: 31px 31px 31px; align-items: center; }
.layer-combo { width: 260px; gap: 6px; padding-left: 7px; }
.icon-row { display: flex; gap: 10px; padding-left: 4px; }
.prop-grid { display: grid; grid-template-columns: 20px 171px; grid-auto-rows: 31px; column-gap: 3px; align-items: center; padding-left: 3px; }
.color-combo { gap: 6px; }
.sample { flex: none; width: 80px; height: 1px; margin-right: 2px; background: #fff; }

/* Drawing tabs */
.file-tabs { flex: none; display: flex; align-items: center; height: 33px; padding-left: 14px; }
.file-tab { height: 30px; margin-top: 3px; padding: 0 10px; }
.current { font-weight: 700; background: #3b4453; }
.file-tab.current { gap: 11px; width: 126px; padding: 0; clip-path: polygon(13px 0, 100% 0, calc(100% - 12px) 100%, 0 100%); }
.add { width: 16px; margin: 0 12px; }
.file-tabs .add { margin-left: 10px; }

/* Canvas */
.canvas { flex: 1; min-height: 0; position: relative; margin: 0 2px 0 3px; background: #212830; border: solid #3b4453; border-width: 5px 0; }
.drawing { position: absolute; inset: 0; }
.ucs { font: 300 21px "Open Sans", sans-serif; fill: #e4e4e4; }
.view-label { position: absolute; left: 3px; top: 6px; }
.doc-window { position: absolute; top: 10px; right: 12px; display: flex; gap: 11px; }
.viewcube { position: absolute; right: 11px; top: 39px; display: grid; justify-items: center; gap: 16px; }
.compass { font: 700 22px "Liberation Sans", sans-serif; fill: #a9abad; text-anchor: middle; }
.cube-top { font: 700 12px "Open Sans", sans-serif; fill: #4f545c; text-anchor: middle; }
.wcs { width: 56px; height: 21px; gap: 6px; margin-right: 2px; border-radius: 5px; background: #9699a5; color: #5f636d; font: 13px "Liberation Sans", sans-serif; }
.navbar { position: absolute; right: 3px; top: 251px; border-radius: 4px; background: #5a5f64; opacity: .95; }

.command { position: absolute; left: 408px; bottom: 1px; width: 1095px; height: 92px; display: flex; background: #2e3441; font: 15px/19px "DejaVu Sans Mono", monospace; }
.command-side { width: 31px; padding-top: 6px; display: flex; flex-direction: column; align-items: center; }
.command-side button:nth-of-type(1) { margin: 8px 6px 0 0; }
.command-side button:nth-of-type(2) { margin-top: 14px; }
.command-main { flex: 1; padding: 1px 0; display: flex; flex-direction: column; gap: 1px; }
.history { height: 65px; padding: 7px 3px 0; background: #c8c8c8; color: #111; }
.prompt { flex: 1; display: flex; align-items: center; gap: 2px; padding: 0 5px; background: #fff; color: #222; }
.prompt input { flex: 1; padding-left: 6px; }
.prompt input::placeholder { color: #777; font-style: italic; opacity: 1; }

/* Layout tabs */
.layout-tabs { flex: none; display: flex; align-items: center; height: 30px; padding-left: 13px; }
.layout-tab { padding: 0 10px 0 9px; }
.layout-tab.current { width: 86px; height: 30px; clip-path: polygon(12px 0, 100% 0, calc(100% - 12px) 100%, 0 100%); }

/* Status bar */
.status { flex: none; display: flex; gap: 3px; height: 44px; padding: 7px 4px 0 5px; margin-bottom: 1px; border-bottom: 1px solid #0f92dc; }
.cell { height: 30px; display: flex; align-items: center; background: #3b4453; }
.cell.message { flex: 1; margin-right: 2px; }
.cell.model { padding: 0 4px; }
.st { width: 30px; height: 30px; color: #d8d8d8; }
.st + .caret { margin: 0 5px; }
.st.sel { height: 28px; background: #5f8fc4; color: #fff; }
.scale { gap: 2px; padding: 0 6px 0 4px; }
.joined { margin-right: -2px; }
.sliver { width: 4px; }
```
